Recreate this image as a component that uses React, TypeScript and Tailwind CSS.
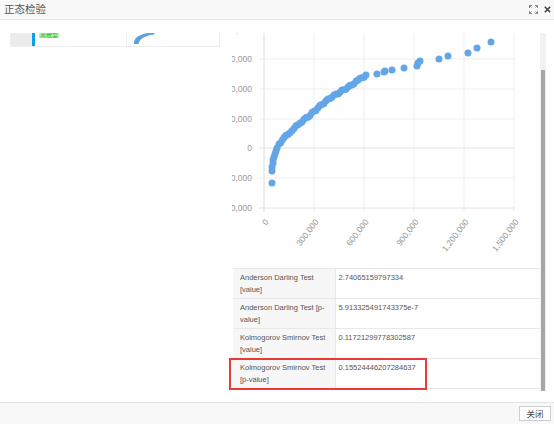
import React from 'react';

const sans = '"Liberation Sans", Arial, "Noto Sans CJK SC", sans-serif';

const anchors: [number, number][] = [
    [279, 144], [286, 136], [292, 130], [300, 123], [310, 115], [320, 106],
    [330, 98], [340, 92], [350, 86], [360, 79], [368, 74],
];

const sparse: [number, number][] = [
    [272, 183], [272, 171], [272, 167], [273, 163], [273, 160], [274, 157], [275, 154],
    [276, 151], [277, 148], [377, 74], [384, 72], [385, 71], [392, 70], [404, 68],
    [417, 66], [418, 63], [420, 61], [439, 59], [448, 56], [468, 53], [477, 48], [491, 42],
];

// fill the dense part of the curve
const buildPoints = () => {
    const pts: [number, number][] = [...sparse];
    for (let i = 0; i < anchors.length - 1; i++) {
        const [x1, y1] = anchors[i];
        const [x2, y2] = anchors[i + 1];
        const len = Math.hypot(x2 - x1, y2 - y1);
        const steps = Math.max(1, Math.round(len / 2.5));
        for (let s = 0; s < steps; s++) {
            const t = s / steps;
            const wobble = Math.sin((i * steps + s) * 1.7) * 0.8;
            pts.push([x1 + (x2 - x1) * t, y1 + (y2 - y1) * t + wobble]);
        }
    }
    return pts;
};

const points = buildPoints();
const gridX = [264, 314, 364, 414, 464, 514];
const gridY = [59, 89, 119, 148, 178, 208];
const yLabels = ['60,000', '40,000', '20,000', '0', '-20,000', '-40,000'];
const xLabels = ['0', '300,000', '600,000', '900,000', '1,200,000', '1,500,000'];

const rows = [
    { name: 'Anderson Darling Test [value]', lines: ['Anderson Darling Test', '[value]'], value: '2.74065159797334' },
    { name: 'Anderson Darling Test [p-value]', lines: ['Anderson Darling Test [p-', 'value]'], value: '5.913325491743375e-7' },
    { name: 'Kolmogorov Smirnov Test [value]', lines: ['Kolmogorov Smirnov Test', '[value]'], value: '0.11721299778302587' },
    { name: 'Kolmogorov Smirnov Test [p-value]', lines: ['Kolmogorov Smirnov Test', '[p-value]'], value: '0.15524446207284637' },
];

const ScatterChart: React.FC = () => (
    <svg width={308} height={235} viewBox="232 33 308 235" className="block shrink-0" style={{ fontFamily: sans }}>
        {gridX.map(x => (
            <line key={`gx${x}`} x1={x} y1={33} x2={x} y2={212} stroke={x === 264 ? '#dcdcdc' : '#eeeeee'} strokeWidth={1} />
        ))}
        {gridY.map(y => (
            <line key={`gy${y}`} x1={259} y1={y} x2={514} y2={y} stroke={y === 148 || y === 208 ? '#e2e2e2' : '#eeeeee'} strokeWidth={1} />
        ))}
        <text x={252} y={33.4} textAnchor="end" fontSize={8.5} fill="#999">80,000</text>
        {gridY.map((y, i) => (
            <text key={`yl${y}`} x={252} y={y + 3} textAnchor="end" fontSize={8.5} fill="#999">{yLabels[i]}</text>
        ))}
        {gridX.map((x, i) => (
            <text key={`xl${x}`} x={x + 5} y={222} textAnchor="end" fontSize={8.5} fill="#999" transform={`rotate(-53 ${x + 5} 222)`}>
                {xLabels[i]}
            </text>
        ))}
        {points.map(([x, y], i) => (
            <circle key={i} cx={x} cy={y} r={3.5} fill="#63a6e8" />
        ))}
    </svg>
);

const App: React.FC = () => {
    return (
        <div className="w-[554px] h-[424px] flex flex-col bg-white overflow-hidden" style={{ fontFamily: sans }}>
            <div className="h-[20px] shrink-0 flex items-center justify-between bg-[#f8f8f8] border-b border-[#e6e6e6] pl-[4px] pr-[3px]">
                <span className="text-[10.5px] text-[#555] leading-none" style={{ fontFamily: '"Noto Sans CJK SC", sans-serif' }}>正态检验</span>
                <div className="flex items-center gap-[6px]">
                    <svg width="9" height="9" viewBox="0 0 9 9" fill="none" stroke="#8a8a8a" strokeWidth="1">
                        <path d="M0.5 3V0.5H3M6 0.5H8.5V3M8.5 6V8.5H6M3 8.5H0.5V6" />
                        <path d="M0.5 0.5L2.5 2.5M8.5 0.5L6.5 2.5M8.5 8.5L6.5 6.5M0.5 8.5L2.5 6.5" />
                    </svg>
                    <svg width="7" height="7" viewBox="0 0 7 7" stroke="#444" strokeWidth="1.6">
                        <path d="M0.8 0.8L6.2 6.2M6.2 0.8L0.8 6.2" />
                    </svg>
                </div>
            </div>

            <div className="flex-1 pt-[13px]">
                <div className="relative flex h-[358px]">
                    <div className="w-[220px] shrink-0 pl-[10px] overflow-hidden">
                        <div className="flex h-[14px] border-b border-r border-[#ececec]">
                            <div className="w-[22px] bg-[#ebebeb]" />
                            <div className="w-[3px] bg-[#0a9fe8]" />
                            <div className="w-[91px] pl-[4px] overflow-hidden flex items-start">
                                <div className="-mt-[2px] bg-[#b9f0b4] text-[#1fb924] text-[6px] leading-[7px] px-[1px] whitespace-nowrap" style={{ fontFamily: '"Noto Sans CJK SC", sans-serif' }}>离散型</div>
                            </div>
                            <div className="flex-1 border-l border-[#ececec] overflow-hidden">
                                <svg width="40" height="13" viewBox="126 33 40 13">
                                    <path d="M133 44 C132.5 37 140 33 153 32.5 L153.5 34.5 C146 35 138.5 38 137.5 44 Z" fill="#5b9fe3" />
                                </svg>
                            </div>
                        </div>
                    </div>

                    <div className="ml-[12px] w-[308px] shrink-0 overflow-hidden flex flex-col">
                        <ScatterChart />
                        <table className="w-[308px] ml-[1px] border-collapse text-[7.5px] leading-[12px] text-[#555]">
                            <tbody>
                                {rows.map(r => (
                                    <tr key={r.name} className="border-t border-b border-[#e8e8e8]">
                                        <td className="w-[102px] bg-[#f7f7f7] pl-[7px] pr-[2px] pt-[3px] pb-[2px] align-top border-r border-[#e8e8e8]">
                                            {r.lines.map(l => <div key={l} className="whitespace-nowrap">{l}</div>)}
                                        </td>
                                        <td className="bg-white pl-[3px] pt-[3px] pb-[2px] align-top">{r.value}</td>
                                    </tr>
                                ))}
                            </tbody>
                        </table>
                    </div>

                    <div className="w-[6px] shrink-0 bg-[#f1f1f1] flex flex-col">
                        <div className="h-[37px]" />
                        <div className="flex-1 mx-[1px] bg-[#a6a6a6]" />
                    </div>

                    <div className="absolute left-[229px] top-[325px] w-[198px] h-[32px] border-2 border-[#e8393b]" />
                </div>
            </div>

            <div className="h-[22px] shrink-0 flex items-center justify-end bg-[#f8f8f8] border-t border-[#e4e4e4] pr-[3px]">
                <button className="w-[32px] h-[15px] bg-white border border-[#cfcfcf] text-[8.5px] text-[#444] leading-none" style={{ fontFamily: '"Noto Sans CJK SC", sans-serif' }}>关闭</button>
            </div>
        </div>
    );
};

export default App;
